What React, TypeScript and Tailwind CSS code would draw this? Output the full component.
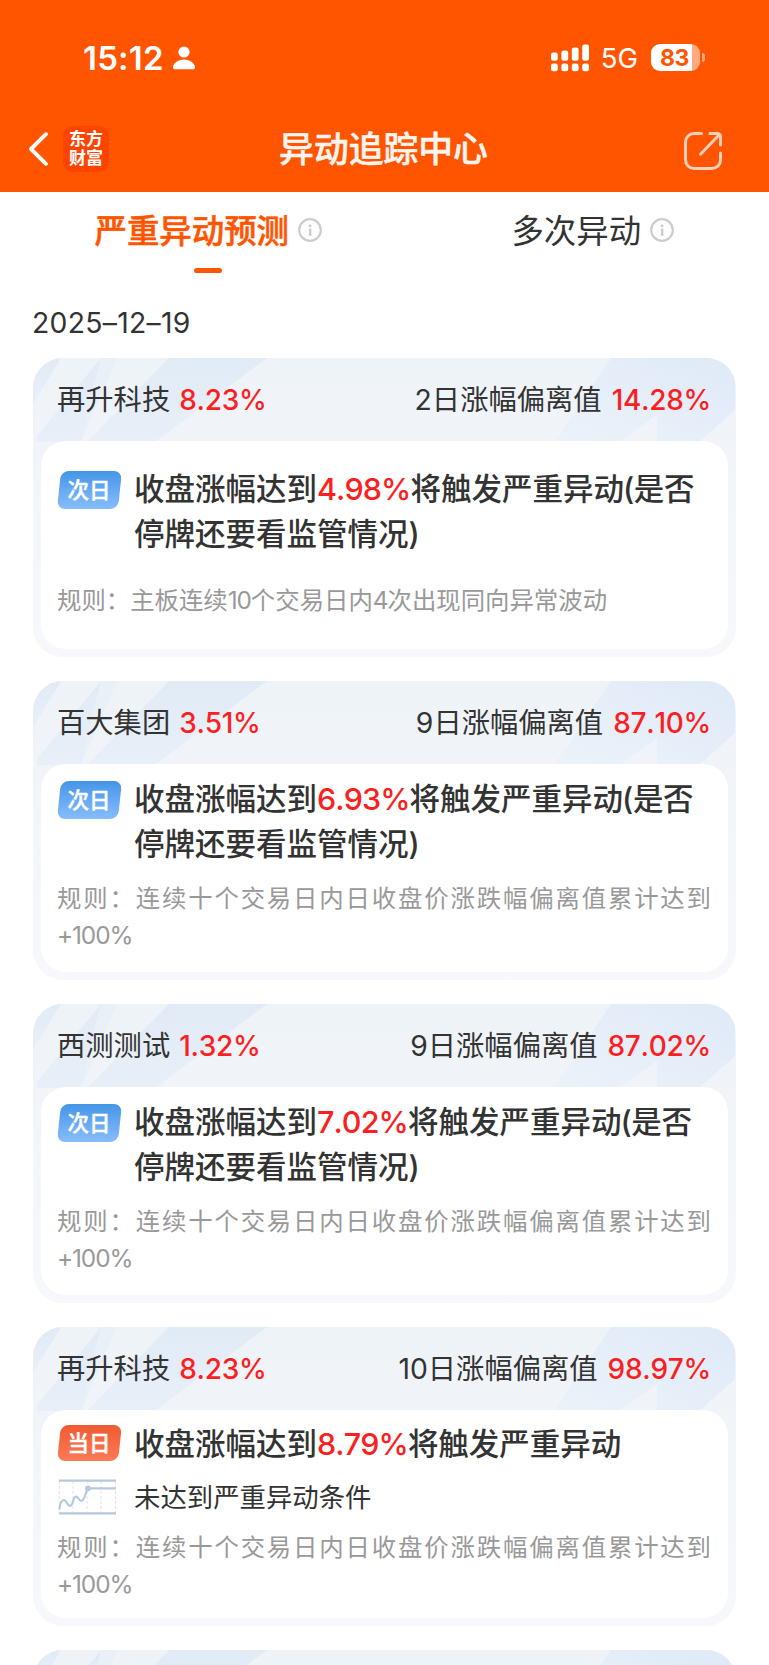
import type { ReactNode } from 'react';

type Kind = 'next' | 'today';

interface Alert {
  id: number;
  name: string;
  change: string;
  days: number;
  deviation: string;
  kind: Kind;
  trigger: string;
  suspend?: boolean;
  note?: string;
  rule: string;
  roomy?: boolean;
}

const LONG_RULE = '规则：连续十个交易日内日收盘价涨跌幅偏离值累计达到+100%';

const alerts: Alert[] = [
  { id: 1, name: '再升科技', change: '8.23%', days: 2, deviation: '14.28%', kind: 'next', trigger: '4.98%', suspend: true, rule: '规则：主板连续10个交易日内4次出现同向异常波动', roomy: true },
  { id: 2, name: '百大集团', change: '3.51%', days: 9, deviation: '87.10%', kind: 'next', trigger: '6.93%', suspend: true, rule: LONG_RULE },
  { id: 3, name: '西测测试', change: '1.32%', days: 9, deviation: '87.02%', kind: 'next', trigger: '7.02%', suspend: true, rule: LONG_RULE },
  { id: 4, name: '再升科技', change: '8.23%', days: 10, deviation: '98.97%', kind: 'today', trigger: '8.79%', note: '未达到严重异动条件', rule: LONG_RULE },
];

function StatusBar() {
  return (
    <div className="flex h-[115px] items-center justify-between pl-[83px] pr-[64px] text-white">
      <div className="flex items-center gap-[9px]">
        <span className="mt-[2px] text-[33px] font-semibold leading-none tracking-[0.2px]">15:12</span>
        <svg width="22" height="24" viewBox="0 0 22 24" fill="currentColor">
          <circle cx="11" cy="6" r="5.6" />
          <path d="M1.8 23.3C.6 23.3 0 22.6 0 21.6 0 17.6 4.8 13.6 11 13.6s11 4 11 8c0 1-.6 1.7-1.8 1.7z" />
        </svg>
      </div>
      <div className="flex items-center">
        <svg width="38" height="28" viewBox="0 0 38 28" fill="currentColor">
          {[8.5, 6.5, 3.5, 0.5].map((y, i) => (
            <g key={y}>
              <rect x={i * 10.4} y={y} width="6.8" height={16.8 - y} rx="2.2" />
              <rect x={i * 10.4} y="19.6" width="6.8" height="7.6" rx="2.2" />
            </g>
          ))}
        </svg>
        <span className="ml-[12px] mt-[2px] text-[27.5px] leading-none">5G</span>
        <div className="ml-[13px] flex h-[27px] w-[49px] items-center justify-center overflow-hidden rounded-[9px] bg-[linear-gradient(90deg,#fff_83%,#ffaa80_83%)] pr-[2px] pt-[1px] text-[23px] font-bold leading-none tracking-[-0.3px] text-[#ff5500]">
          83
        </div>
        <span className="ml-[2px] h-[9px] w-[3px] rounded-r-full bg-[#ffaa80]" />
      </div>
    </div>
  );
}

function NavBar() {
  return (
    <div className="flex h-[77px] items-center justify-between pl-[28px] pr-[46px] pb-[10px]">
      <div className="flex w-[81px] items-center gap-[13px]">
        <svg width="22" height="36" viewBox="0 0 22 36" fill="none" stroke="#fff" strokeWidth="3.9" strokeLinecap="round" strokeLinejoin="round">
          <path d="M18 3.2 3 18l15 14.8" />
        </svg>
        <div className="flex h-[46px] w-[46px] shrink-0 flex-col items-center justify-center rounded-[10px] bg-[#ff4400] pt-[1px] text-[17px] font-bold leading-[19.5px] text-white">
          <span>东方</span>
          <span>财富</span>
        </div>
      </div>
      <h1 className="whitespace-nowrap pt-[1px] text-[34.8px] font-medium leading-none text-[#fff5f0] [-webkit-text-stroke:0.5px]">异动追踪中心</h1>
      <div className="flex w-[65px] justify-end pt-[4px]">
        <svg width="40" height="40" viewBox="0 0 40 40" fill="none" stroke="#ffd0b8" strokeWidth="3" strokeLinecap="round" strokeLinejoin="round">
          <path d="M18.5 2.5H11A8.5 8.5 0 0 0 2.5 11v18a8.5 8.5 0 0 0 8.5 8.5h18a8.5 8.5 0 0 0 8.5-8.5v-7" />
          <path d="M17.5 23.2 36.5 3.5M27 2.5h7.5a3 3 0 0 1 3 3V14" />
        </svg>
      </div>
    </div>
  );
}

function InfoIcon() {
  return (
    <svg width="24" height="24" viewBox="0 0 24 24" fill="none" stroke="#cdcdcd" strokeWidth="2.2">
      <circle cx="12" cy="12" r="10.8" />
      <path d="M12.2 10.6v6.8" strokeWidth="2.4" />
      <path d="M10.6 11.2h1.6M10.6 17h3.2" strokeWidth="1" />
      <circle cx="12.1" cy="7.7" r="1.5" fill="#cdcdcd" stroke="none" />
    </svg>
  );
}

function Tab({ active, children }: { active?: boolean; children: ReactNode }) {
  return (
    <div className="flex flex-col items-center pl-8">
      <div className="flex h-[76px] items-center gap-[9px]">
        <span className={active ? 'pt-[5px] text-[32.4px] font-medium text-[#ff5500] [-webkit-text-stroke:0.5px]' : 'pt-[5px] text-[32.4px] text-[#333333]'}>{children}</span>
        <InfoIcon />
      </div>
      {active && <span className="h-[4.5px] w-[28px] rounded-full bg-[#ff5500]" />}
    </div>
  );
}

function CardPattern() {
  return (
    <svg className="absolute inset-x-0 top-0" width="702" height="84" viewBox="0 0 702 84">
      <defs>
        <linearGradient id="leftBand" x1="0" y1="0" x2="0" y2="1">
          <stop offset="0" stopColor="#e1ebf6" />
          <stop offset="1" stopColor="#e8eff8" />
        </linearGradient>
        <linearGradient id="rightBand" x1="1" y1="0" x2="0" y2="1">
          <stop offset="0" stopColor="#dfeaf8" />
          <stop offset="1" stopColor="#ecf2f9" />
        </linearGradient>
      </defs>
      <g fill="url(#leftBand)">
        <path d="M0 0h28L0 46z" />
        <path d="M68 0 4 78v6h44L62 42 84 0z" />
        <path d="M136 0h98L122 84H54z" />
      </g>
      <path d="M68 0 60 30 48 84 84 0z" fill="#e9f0f8" />
      <path d="M578 0h124v52l-36 32h-42V57l-38 27h-65z" fill="url(#rightBand)" />
    </svg>
  );
}

function DayBadge({ kind }: { kind: Kind }) {
  const next = kind === 'next';
  return (
    <div className={next ? 'relative flex h-[37.5px] w-[64px] shrink-0 items-center justify-center' : 'relative flex h-[36px] w-[64px] shrink-0 items-center justify-center'}>
      <span
        className={
          next
            ? 'absolute inset-x-[1.5px] inset-y-0 -skew-x-6 rounded-[8px] bg-linear-to-b from-[#4495e8] to-[#86bdfc]'
            : 'absolute inset-x-[1.5px] inset-y-0 -skew-x-6 rounded-[8px] bg-linear-to-b from-[#ef5a30] to-[#fb7a57]'
        }
      />
      <span className="relative pt-px text-[21.5px] font-medium leading-none text-white [-webkit-text-stroke:0.4px]">{next ? '次日' : '当日'}</span>
    </div>
  );
}

function MiniChart() {
  return (
    <svg width="64" height="36" viewBox="0 0 64 36" fill="none">
      <path d="M2.2 2v32M16 2v32M30 2v32M44 2v32M58.5 2v32" stroke="#dde4ef" strokeDasharray="3 2" />
      <path d="M2 1.6h57M2 34.4h57" stroke="#b5c9dc" strokeWidth="2.2" />
      <path d="M2.3 30.6C3 25.5 4.3 21 6.8 21c3.2 0 3 5.800 6.200 5.800 3.600 0 2.400-9.200 6-9.200 2.600 0 2.700 4.200 5.200 4.200C28 21.800 28 13.500 31 9.300H59" stroke="#b5c9dc" strokeWidth="2.2" strokeLinejoin="round" />
      <circle cx="31" cy="9.3" r="2.9" fill="#b5c9dc" />
    </svg>
  );
}

// digits run a little wide next to the Chinese glyphs, so tighten them
function RuleText({ text }: { text: string }) {
  return text.split(/([+\d%]+)/).filter(Boolean).map((part, i) =>
    /\d/.test(part) ? <span key={i} className="tracking-[-1.1px]">{part}</span> : part
  );
}

function Percent({ children }: { children: ReactNode }) {
  return <span className="-mt-[2px] text-[28px] font-medium tracking-[-0.3px] text-[#fc1f22] [font-kerning:none]">{children}</span>;
}

function AlertCard({ alert }: { alert: Alert }) {
  const { roomy, note } = alert;
  return (
    <article className="relative h-[299px] overflow-hidden rounded-[30px] bg-linear-to-b from-[#eef3f8] to-[#f7f8fb] px-2 pb-2">
      <CardPattern />
      <div className="relative flex h-[83px] items-center justify-between pl-[16px] pr-[17px] pt-[2px] text-[28.3px] text-[#333333]">
        <div className="flex items-center gap-[9px]">
          <span>{alert.name}</span>
          <Percent>{alert.change}</Percent>
        </div>
        <div className="flex items-center gap-[10px]">
          <span>{alert.days}日涨幅偏离值</span>
          <Percent>{alert.deviation}</Percent>
        </div>
      </div>
      <div className={roomy ? 'relative h-[208px] rounded-[25px] bg-white pl-[16px] pr-[17px] pt-[25px]' : note ? 'relative h-[208px] rounded-[25px] bg-white pl-[16px] pr-[17px] pt-[11px]' : 'relative h-[208px] rounded-[25px] bg-white pl-[16px] pr-[17px] pt-[12px]'}>
        <div className="flex gap-[13px]">
          <div className={note ? 'pt-[4px]' : 'pt-[5px]'}>
            <DayBadge kind={alert.kind} />
          </div>
          <div className="flex-1 whitespace-nowrap text-[30.5px] font-medium leading-[45px] text-[#333333]">
            <p className="flex">
              <span>收盘涨幅达到</span>
              <span className="tracking-[-0.9px] text-[#fc1f22] [font-kerning:none]">{alert.trigger}</span>
              <span>将触发严重异动</span>
              {alert.suspend && <span className="-ml-[1px] tracking-[-0.4px]">(是否</span>}
            </p>
            {alert.suspend && <p>停牌还要看监管情况)</p>}
          </div>
        </div>
        {note && (
          <div className="flex h-[62px] items-center gap-[13px]">
            <MiniChart />
            <span className="text-[26.4px] leading-none text-[#333333]">{note}</span>
          </div>
        )}
        <p className={roomy ? 'mt-[26px] text-[24.4px] leading-[37px] text-[#999999]' : note ? 'mt-[1px] text-justify text-[24.4px] leading-[37px] text-[#999999]' : 'mt-[14px] text-justify text-[24.4px] leading-[37px] text-[#999999]'}>
          <RuleText text={alert.rule} />
        </p>
      </div>
    </article>
  );
}

export default function App() {
  return (
    <div className="h-[1665px] w-[769px] overflow-hidden bg-white font-[Inter,'Noto_Sans_CJK_SC',sans-serif]">
      <header className="h-[192px] bg-[#ff5500]">
        <StatusBar />
        <NavBar />
      </header>
      <nav className="grid h-[96px] grid-cols-2">
        <Tab active>严重异动预测</Tab>
        <Tab>多次异动</Tab>
      </nav>
      <main className="px-[33px]">
        <div className="-ml-px flex h-[70px] items-center text-[28.3px] leading-none tracking-[0.3px] text-[#333333]">2025–12–19</div>
        <div className="flex flex-col gap-6">
          {alerts.map((a) => (
            <AlertCard key={a.id} alert={a} />
          ))}
          {/* next card, only its top edge is on screen */}
          <div className="relative h-[299px] overflow-hidden rounded-[30px] bg-[#eef3f8]">
            <CardPattern />
          </div>
        </div>
      </main>
    </div>
  );
}
